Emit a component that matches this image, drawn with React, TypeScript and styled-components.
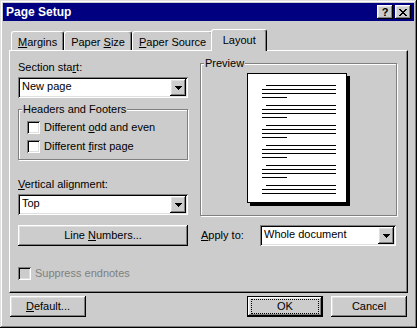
import React from 'react'
import styled, { createGlobalStyle, css } from 'styled-components'

const face = '#cccccc'

const raised = css`
  box-shadow: inset -1px -1px #000, inset 1px 1px #fff, inset -2px -2px #808080, inset 2px 2px #dfdfdf;
`

const sunken = css`
  box-shadow: inset 1px 1px #808080, inset -1px -1px #fff, inset 2px 2px #000, inset -2px -2px #dfdfdf;
`

const GlobalStyle = createGlobalStyle`
  body {
    margin: 0;
    background: ${face};
  }
  * {
    box-sizing: border-box;
  }
`

const Window = styled.div`
  width: 417px;
  height: 328px;
  padding: 3px;
  display: flex;
  flex-direction: column;
  background: ${face};
  box-shadow: inset -1px -1px #000, inset 1px 1px #dfdfdf, inset -2px -2px #808080, inset 2px 2px #fff;
  font-family: "Liberation Sans", Arial, sans-serif;
  font-size: 11px;
  line-height: 13px;
  color: #000;
`

const TitleBar = styled.div`
  height: 18px;
  display: flex;
  align-items: center;
  padding: 0 3px;
  background: #000080;
  color: #fff;
  font-size: 12px;
  font-weight: bold;
`

const TitleButtons = styled.div`
  margin-left: auto;
  display: flex;
  gap: 2px;
`

const CaptionButton = styled.div`
  width: 16px;
  height: 14px;
  display: flex;
  align-items: center;
  justify-content: center;
  background: ${face};
  color: #000;
  font-size: 11px;
  font-weight: bold;
  ${raised}
`

const TabStrip = styled.div`
  height: 21px;
  margin: 8px 6px 0;
  padding-left: 2px;
  display: flex;
  align-items: flex-end;
  position: relative;
  z-index: 1;
`

const Tab = styled.div<{ $active?: boolean }>`
  height: 19px;
  min-width: 52px;
  padding: 4px 6px 0;
  text-align: center;
  white-space: nowrap;
  background: ${face};
  border: 1px solid #fff;
  border-bottom: 0;
  border-right-color: #000;
  border-radius: 3px 3px 0 0;
  box-shadow: inset -1px 0 #808080;

  ${p => p.$active && css`
    height: 22px;
    min-width: 56px;
    margin: 0 -2px -1px;
    position: relative;
    z-index: 1;
  `}
`

const Panel = styled.div`
  height: 243px;
  margin: 0 6px;
  padding: 6px 0 0 8px;
  display: grid;
  grid-template-columns: 170px 197px;
  column-gap: 12px;
  align-items: start;
  border: 1px solid;
  border-color: #fff #000 #000 #fff;
  box-shadow: inset -1px -1px #808080;
`

const Column = styled.div<{ $top?: number }>`
  display: flex;
  flex-direction: column;
  padding-top: ${p => p.$top ?? 0}px;
`

const Label = styled.div<{ $gap?: number }>`
  margin-top: ${p => p.$gap ?? 0}px;
  margin-bottom: 3px;
  white-space: nowrap;
`

const U = styled.span`
  text-decoration: underline;
  text-underline-offset: 1px;
`

const Select = styled.div<{ $width?: number }>`
  width: ${p => (p.$width ? `${p.$width}px` : '100%')};
  height: 21px;
  padding: 2px;
  display: flex;
  background: #fff;
  ${sunken}
`

const SelectValue = styled.div`
  flex: 1;
  padding: 1px 2px 0;
  white-space: nowrap;
  overflow: hidden;
`

const ArrowButton = styled.div`
  width: 16px;
  height: 17px;
  display: flex;
  align-items: center;
  justify-content: center;
  background: ${face};
  ${raised}
`

const Group = styled.fieldset<{ $gap?: number; $pb?: number }>`
  margin: ${p => p.$gap ?? 0}px 0 0;
  padding: 0 3px ${p => p.$pb ?? 6}px;
  min-width: 0;
  border: 1px solid #808080;
  box-shadow: inset 1px 1px #fff, 1px 1px #fff;
`

const Legend = styled.legend`
  padding: 0 1px;
  line-height: 13px;
  background: ${face};
`

const CheckList = styled.div`
  padding: 5px 0 0 5px;
  display: flex;
  flex-direction: column;
  gap: 6px;
`

const CheckRow = styled.label<{ $disabled?: boolean; $gap?: number }>`
  margin-top: ${p => p.$gap ?? 0}px;
  display: flex;
  align-items: center;
  gap: 4px;
  white-space: nowrap;
  color: ${p => (p.$disabled ? '#808080' : '#000')};
`

const Box = styled.span<{ $disabled?: boolean }>`
  width: 13px;
  height: 13px;
  flex: none;
  background: ${p => (p.$disabled ? face : '#fff')};
  ${sunken}
`

const Button = styled.div<{ $default?: boolean; $width?: number; $gap?: number }>`
  width: ${p => (p.$width ? `${p.$width}px` : '100%')};
  height: 21px;
  margin-top: ${p => p.$gap ?? 0}px;
  padding-top: 4px;
  position: relative;
  text-align: center;
  white-space: nowrap;
  background: ${face};
  ${raised}

  ${p => p.$default && css`
    box-shadow: inset 0 0 0 1px #000, inset -2px -2px #000, inset 2px 2px #fff,
      inset -3px -3px #808080, inset 3px 3px #dfdfdf;

    &::after {
      content: '';
      position: absolute;
      inset: 3px 4px;
      border: 1px dotted #000;
    }
  `}
`

const PreviewArea = styled.div`
  padding: 3px 3px 12px 0;
`

const Page = styled.div`
  width: 100px;
  height: 130px;
  margin: 0 auto;
  background: #fff;
  border: 1px solid #000;
  box-shadow: 3px 3px 0 #000;

  svg {
    display: block;
    width: 98px;
    height: 128px;
  }
`

const ApplyRow = styled.div`
  margin-top: 9px;
  padding: 0 1px;
  display: flex;
  align-items: center;
  justify-content: space-between;
`

const Footer = styled.div`
  margin-top: 3px;
  padding: 0 7px;
  display: flex;
  justify-content: space-between;
`

const ButtonGroup = styled.div`
  display: flex;
  gap: 8px;
`

function Arrow() {
  return (
    <svg width="7" height="4" viewBox="0 0 7 4" shapeRendering="crispEdges">
      <path d="M0 0h7v1H0z M1 1h5v1H1z M2 2h3v1H2z M3 3h1v1H3z" fill="#000" />
    </svg>
  )
}

function CloseGlyph() {
  return (
    <svg width="8" height="7" viewBox="0 0 8 7" shapeRendering="crispEdges">
      <path
        d="M0 0h2v1H0z M6 0h2v1H6z M1 1h2v1H1z M5 1h2v1H5z M2 2h4v1H2z M3 3h2v1H3z M2 4h4v1H2z M1 5h2v1H1z M5 5h2v1H5z M0 6h2v1H0z M6 6h2v1H6z"
        fill="#000"
      />
    </svg>
  )
}

function Dropdown(props: { value: string; width?: number }) {
  return (
    <Select $width={props.width}>
      <SelectValue>{props.value}</SelectValue>
      <ArrowButton>
        <Arrow />
      </ArrowButton>
    </Select>
  )
}

function PagePreview() {
  const groups = [0, 1, 2, 3, 4, 5]
  return (
    <Page>
      <svg viewBox="0 0 98 128" shapeRendering="crispEdges">
        {groups.map(g => {
          const y = 11 + g * 20
          return (
            <g key={g} fill="#000">
              <rect x="18" y={y} width="70" height="1" />
              <rect x="14" y={y + 4} width="74" height="1" />
              <rect x="14" y={y + 8} width="74" height="1" />
              {g < 5 && <rect x="14" y={y + 12} width="25" height="1" />}
            </g>
          )
        })}
      </svg>
    </Page>
  )
}

export default function App() {
  return (
    <>
      <GlobalStyle />
      <Window>
        <TitleBar>
          Page Setup
          <TitleButtons>
            <CaptionButton>?</CaptionButton>
            <CaptionButton>
              <CloseGlyph />
            </CaptionButton>
          </TitleButtons>
        </TitleBar>

        <TabStrip>
          <Tab><U>M</U>argins</Tab>
          <Tab>Paper <U>S</U>ize</Tab>
          <Tab><U>P</U>aper Source</Tab>
          <Tab $active>Layout</Tab>
        </TabStrip>

        <Panel>
          <Column $top={4}>
            <Label>Section sta<U>r</U>t:</Label>
            <Dropdown value="New page" />

            <Group $gap={5}>
              <Legend>Headers and Footers</Legend>
              <CheckList>
                <CheckRow>
                  <Box />
                  <span>Different <U>o</U>dd and even</span>
                </CheckRow>
                <CheckRow>
                  <Box />
                  <span>Different <U>f</U>irst page</span>
                </CheckRow>
              </CheckList>
            </Group>

            <Label $gap={18}><U>V</U>ertical alignment:</Label>
            <Dropdown value="Top" />

            <Button $gap={10}>Line <U>N</U>umbers...</Button>

            <CheckRow $disabled $gap={21}>
              <Box $disabled />
              <span>Suppress endnotes</span>
            </CheckRow>
          </Column>

          <Column>
            <Group $pb={0}>
              <Legend>Preview</Legend>
              <PreviewArea>
                <PagePreview />
              </PreviewArea>
            </Group>

            <ApplyRow>
              <span><U>A</U>pply to:</span>
              <Dropdown value="Whole document" width={136} />
            </ApplyRow>
          </Column>
        </Panel>

        <Footer>
          <Button $width={76}><U>D</U>efault...</Button>
          <ButtonGroup>
            <Button $width={76} $default>OK</Button>
            <Button $width={76}>Cancel</Button>
          </ButtonGroup>
        </Footer>
      </Window>
    </>
  )
}
